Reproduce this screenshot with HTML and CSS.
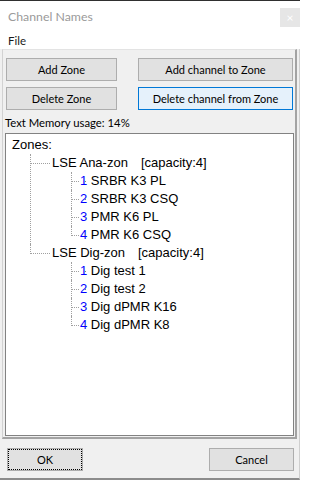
FILE: index.html
```html
<!DOCTYPE html>
<html>
<head>
<meta charset="utf-8">
<link rel="stylesheet" href="styles.css">
</head>
<body>
<div class="window">
  <div class="titlebar">
    <span class="title">Channel Names</span>
    <span class="close">×</span>
  </div>
  <div class="menubar"><span class="menu-item">File</span></div>
  <div class="client">
    <div class="panel">
      <div class="btn-row">
        <button class="btn btn-left">Add Zone</button>
        <button class="btn btn-right">Add channel to Zone</button>
      </div>
      <div class="btn-row">
        <button class="btn btn-left">Delete Zone</button>
        <button class="btn btn-right btn-hot">Delete channel from Zone</button>
      </div>
      <div class="usage">Text Memory usage: 14%</div>
      <div class="tree">
        <div class="root">Zones:</div>
        <ul class="l1">
          <li>
            <div class="row">LSE Ana-zon<span class="cap">[capacity:4]</span></div>
            <ul class="l2">
              <li><div class="row"><span class="num">1</span><i class="dot"></i> SRBR K3 PL</div></li>
              <li><div class="row"><span class="num">2</span><i class="dot"></i> SRBR K3 CSQ</div></li>
              <li><div class="row"><span class="num">3</span><i class="dot"></i> PMR K6 PL</div></li>
              <li><div class="row"><span class="num">4</span><i class="dot"></i> PMR K6 CSQ</div></li>
            </ul>
          </li>
          <li>
            <div class="row">LSE Dig-zon<span class="cap">[capacity:4]</span></div>
            <ul class="l2">
              <li><div class="row"><span class="num">1</span><i class="dot"></i> Dig test 1</div></li>
              <li><div class="row"><span class="num">2</span><i class="dot"></i> Dig test 2</div></li>
              <li><div class="row"><span class="num">3</span><i class="dot"></i> Dig dPMR K16</div></li>
              <li><div class="row"><span class="num">4</span><i class="dot"></i> Dig dPMR K8</div></li>
            </ul>
          </li>
        </ul>
      </div>
    </div>
    <div class="footer">
      <button class="btn btn-ok">OK</button>
      <button class="btn btn-cancel">Cancel</button>
    </div>
  </div>
</div>
</body>
</html>
```
FILE: styles.css
```css
* { box-sizing: border-box; }
html, body { margin: 0; padding: 0; }
body {
  width: 300px;
  height: 480px;
  overflow: hidden;
  background: #ffffff;
  font-family: Lato, "Noto Sans", sans-serif;
  font-size: 11px;
}
.window {
  width: 300px;
  height: 480px;
  display: flex;
  flex-direction: column;
  border-top: 1px solid #2f2f2f;
}
.titlebar {
  height: 31px;
  display: flex;
  align-items: flex-start;
  background: #ffffff;
}
.title {
  padding-left: 8px;
  line-height: 31px;
  color: #9a9a9a;
  font-size: 12.3px;
}
.close {
  margin-left: auto;
  margin-top: 7px;
  width: 20px;
  height: 19px;
  background: #e6e6e6;
  color: #ffffff;
  font-size: 12px;
  line-height: 19px;
  text-align: center;
}
.menubar {
  height: 17px;
  background: #ffffff;
  display: flex;
  align-items: center;
}
.menu-item {
  padding-left: 8px;
  color: #1a1a1a;
  font-size: 11.5px;
  line-height: 17px;
}
.client {
  flex: 1;
  display: flex;
  flex-direction: column;
  background: #f0f0f0;
  padding-left: 2px;
  padding-right: 2px;
  border-right: 1px solid #cfcfcf;
  border-bottom: 2px solid #8c8c8c;
}
.panel {
  height: 390px;
  border-top: 1px solid #e3e3e3;
  border-left: 1px solid #d2d2d2;
  border-right: 2px solid #a3a3a3;
  border-bottom: 2px solid #a3a3a3;
  padding-top: 8px;
  padding-left: 2px;
  display: flex;
  flex-direction: column;
}
.btn-row {
  display: flex;
  height: 23px;
  margin-bottom: 6px;
}
.btn-row + .btn-row { margin-bottom: 0; }
.btn {
  font-family: Lato, "Noto Sans", sans-serif;
  font-size: 11px;
  color: #000000;
  background: #e1e1e1;
  border: 1px solid #adadad;
  border-radius: 0;
  padding: 0;
  margin: 0;
  height: 23px;
  line-height: 20px;
}
.btn-left { width: 111px; margin-left: 1px; }
.btn-right { width: 155px; margin-left: 21px; }
.btn-hot {
  background: #e5f1fb;
  border-color: #0078d7;
}
.usage {
  margin-top: 4px;
  line-height: 18px;
  font-size: 11.3px;
  color: #000000;
}
.tree {
  margin-top: 1px;
  width: 289px;
  height: 303px;
  background: #ffffff;
  border: 1px solid #828282;
  padding-top: 2px;
  font-family: "Liberation Sans", Arial, sans-serif;
  font-size: 13px;
  color: #000000;
}
.root {
  margin-left: 6px;
  line-height: 18px;
}
.row {
  line-height: 18px;
  white-space: nowrap;
}
.tree ul {
  list-style: none;
  margin: 0;
  padding: 0;
}
.tree li {
  position: relative;
}
.tree li::before {
  content: "";
  position: absolute;
  left: 0;
  top: 0;
  bottom: 0;
  border-left: 1px dotted #a0a0a0;
}
.tree li:last-child::before {
  bottom: auto;
  height: 10px;
}
.tree li::after {
  content: "";
  position: absolute;
  top: 9px;
  left: 1px;
  border-top: 1px dotted #a0a0a0;
}
.l1 { margin-left: 24px !important; }
.l1 > li { padding-left: 22px; }
.l1 > li::after { width: 19px; }
.l2 { margin-left: 19px !important; }
.l2 > li { padding-left: 9px; }
.l2 > li::after { width: 7px; }
.cap { margin-left: 13px; }
.num { color: #0000ff; }
.dot {
  display: inline-block;
  width: 1px;
  height: 1px;
  background: #808080;
  vertical-align: middle;
  margin-left: -2px;
  margin-right: 1px;
}
.footer {
  flex: 1;
  display: flex;
  align-items: flex-start;
  padding-top: 9px;
}
.btn-ok {
  width: 76px;
  margin-left: 5px;
  outline: 1px dotted #000000;
  outline-offset: -2px;
}
.btn-cancel {
  width: 85px;
  margin-left: auto;
  margin-right: 3px;
}
```
